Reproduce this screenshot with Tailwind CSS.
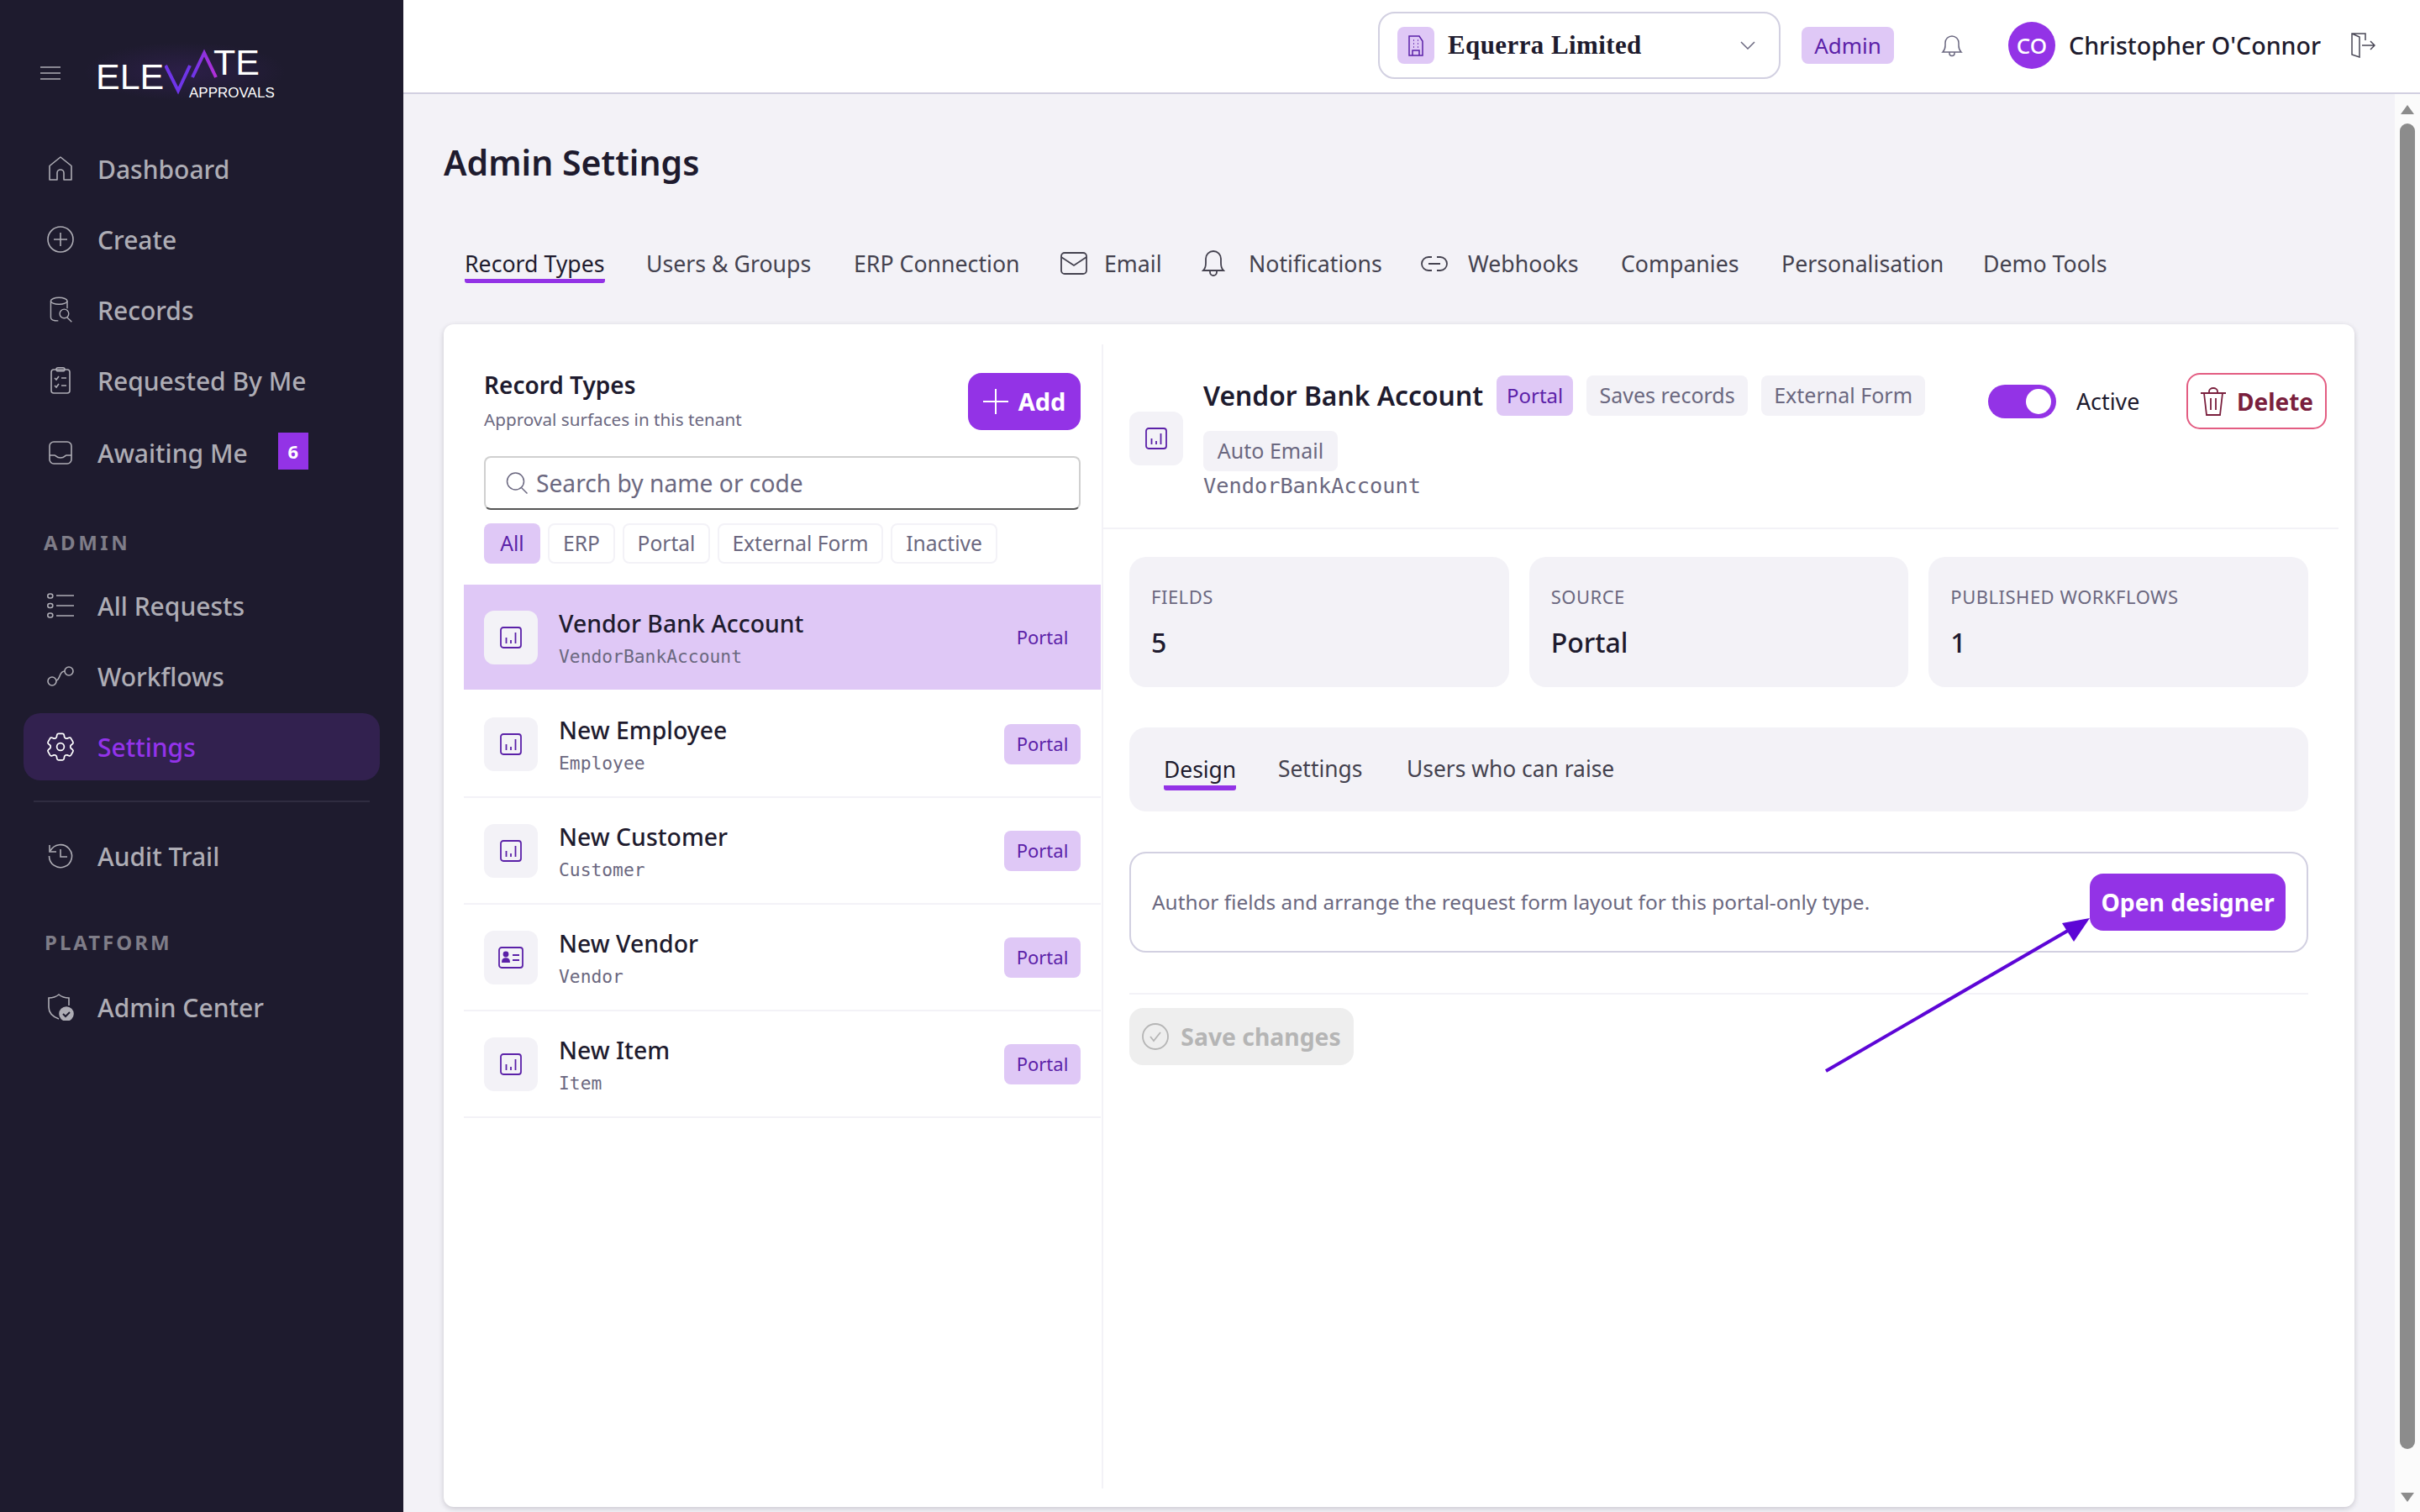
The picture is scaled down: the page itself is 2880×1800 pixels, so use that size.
<!DOCTYPE html>
<html lang="en">
<head>
    <meta charset="UTF-8">
    <meta name="viewport" content="width=device-width, initial-scale=1.0">
    <title>Admin Settings</title>
    <script src="https://cdn.jsdelivr.net/npm/@tailwindcss/browser@4"></script>
</head>
<body class="relative w-[2880px] h-[1800px] overflow-hidden flex bg-[#f3f2f7] font-['Noto_Sans',sans-serif] text-[#1e1b2e]">
    <!-- Sidebar -->
    <aside class="w-[480px] h-full shrink-0 bg-[#1e1b2e] flex flex-col px-[28px] text-[#aeadb5]">
        <div class="h-[161px] shrink-0 flex items-start pt-[79px] pl-[20px]">
            <svg class="w-[24px] h-[16px]" viewBox="0 0 24 16" fill="none" stroke="#aeadb5" stroke-width="1.5"><path d="M0 1h24M0 8h24M0 15h24"/></svg>
            <!-- Logo -->
            <div class="relative ml-[28px] -mt-[29px] w-[240px] h-[70px] bg-[radial-gradient(closest-side,#2c1f48,#1e1b2e)] font-['Liberation_Sans',sans-serif] text-white">
                <span class="absolute left-[14px] top-[16px] text-[43px] leading-[50px]">ELE</span>
                <svg class="absolute left-[96px] top-0 w-[64px] h-[64px]" viewBox="0 0 64 64" fill="none" stroke-width="4"><defs><linearGradient id="lg" x1="0" x2="1"><stop offset="0" stop-color="#6d35e8"/><stop offset="1" stop-color="#b32fd8"/></linearGradient></defs><path d="M1 28l15 30 14-30" stroke="#6f35e8"/><path d="M33 42L47 13l14 29" stroke="url(#lg)"/></svg>
                <span class="absolute left-[154px] -top-[1px] text-[43px] leading-[50px]">TE</span>
                <span class="absolute left-[125px] top-[51px] text-[17px] leading-[20px]">APPROVALS</span>
            </div>
        </div>
        <nav class="flex flex-col gap-[4px] text-[30px] font-medium">
            <a class="h-[80px] flex items-center pl-[28px] gap-[28px]"><svg class="w-[32px] h-[32px]" viewBox="0 0 32 32" fill="none" stroke="#aeadb5" stroke-width="1.6" stroke-linejoin="round"><path d="M3 29V12.5L16 2l13 10.5V29h-9v-8a4 4 0 0 0-8 0v8z"/></svg>Dashboard</a>
            <a class="h-[80px] flex items-center pl-[28px] gap-[28px]"><svg class="w-[32px] h-[32px]" viewBox="0 0 32 32" fill="none" stroke="#aeadb5" stroke-width="1.6"><circle cx="16" cy="16" r="15"/><path d="M16 8v16M8 16h16"/></svg>Create</a>
            <a class="h-[80px] flex items-center pl-[28px] gap-[28px]"><svg class="w-[32px] h-[32px]" viewBox="0 0 32 36" fill="none" stroke="#aeadb5" stroke-width="1.6"><ellipse cx="14" cy="6" rx="11" ry="4.5"/><path d="M3 6v22c0 3 4 4.5 10 4.5M25 6v10"/><circle cx="21" cy="23" r="6"/><path d="M25 28l6 6"/></svg>Records</a>
            <a class="h-[80px] flex items-center pl-[28px] gap-[28px]"><svg class="w-[32px] h-[32px]" viewBox="0 0 32 32" fill="none" stroke="#aeadb5" stroke-width="1.6"><rect x="5" y="3" width="22" height="28" rx="3"/><rect x="11" y="0.8" width="10" height="4" rx="2"/><path d="M9 13l2 2 3-4M17 13h6M9 22l2 2 3-4M17 22h6"/></svg>Requested By Me</a>
            <a class="h-[80px] mt-[2px] flex items-center pl-[28px] gap-[28px]"><svg class="w-[32px] h-[32px]" viewBox="0 0 32 32" fill="none" stroke="#aeadb5" stroke-width="1.6"><rect x="3" y="3" width="26" height="26" rx="5"/><path d="M3 19h6c1.500 0 2 3 7 3s5.500-3 7-3h6"/></svg>Awaiting Me<span class="ml-[8px] -mt-[4px] w-[36px] h-[44px] bg-[#9333e6] text-white text-[22px] font-bold flex items-center justify-center">6</span></a>
        </nav>
        <p class="mt-[44px] h-[46px] flex items-center pl-[24px] text-[24px] font-bold tracking-[3.500px] text-[#7f7d88]">ADMIN</p>
        <nav class="mt-[12px] flex flex-col gap-[4px] text-[30px] font-medium">
            <a class="h-[80px] flex items-center pl-[28px] gap-[28px]"><svg class="w-[32px] h-[32px]" viewBox="0 0 32 32" fill="none" stroke="#aeadb5" stroke-width="1.6"><rect x="0.800" y="2" width="6" height="5" rx="2.500"/><rect x="0.800" y="13.500" width="6" height="5" rx="2.500"/><rect x="0.800" y="25" width="6" height="5" rx="2.500"/><path d="M11 4h21M11 16h21M11 28h21"/></svg>All Requests</a>
            <a class="h-[80px] flex items-center pl-[28px] gap-[28px]"><svg class="w-[32px] h-[32px]" viewBox="0 0 32 32" fill="none" stroke="#aeadb5" stroke-width="1.6"><circle cx="6" cy="22" r="5"/><circle cx="26" cy="10" r="5"/><path d="M11 21c5-1 3-11 10-11"/></svg>Workflows</a>
            <a class="h-[80px] flex items-center pl-[23px] gap-[23px] rounded-[20px] bg-[#32214f] text-[#9333ea]"><svg class="w-[42px] h-[42px]" viewBox="0 0 24 24" fill="none" stroke="#fff" stroke-width="1" stroke-linejoin="round"><path d="M9.594 3.94c.09-.542.56-.94 1.11-.94h2.593c.55 0 1.02.398 1.11.94l.213 1.281c.063.374.313.686.645.87.074.04.147.083.22.127.325.196.72.257 1.075.124l1.217-.456a1.125 1.125 0 0 1 1.37.49l1.296 2.247a1.125 1.125 0 0 1-.26 1.431l-1.003.827c-.293.241-.438.613-.43.992a7.723 7.723 0 0 1 0 .255c-.008.378.137.75.43.991l1.004.827c.424.35.534.955.26 1.43l-1.298 2.247a1.125 1.125 0 0 1-1.369.491l-1.217-.456c-.355-.133-.75-.072-1.076.124a6.47 6.47 0 0 1-.22.128c-.331.183-.581.495-.644.869l-.213 1.281c-.09.543-.56.94-1.11.94h-2.594c-.55 0-1.019-.398-1.11-.94l-.213-1.281c-.062-.374-.312-.686-.644-.87a6.52 6.52 0 0 1-.22-.127c-.325-.196-.72-.257-1.076-.124l-1.217.456a1.125 1.125 0 0 1-1.369-.49l-1.297-2.247a1.125 1.125 0 0 1 .26-1.431l1.004-.827c.292-.24.437-.613.43-.991a6.932 6.932 0 0 1 0-.255c.007-.38-.138-.751-.43-.992l-1.004-.827a1.125 1.125 0 0 1-.26-1.43l1.297-2.247a1.125 1.125 0 0 1 1.37-.491l1.216.456c.356.133.751.072 1.076-.124.072-.044.146-.086.22-.128.332-.183.582-.495.644-.869l.214-1.28Z"/><circle cx="12" cy="12" r="2.500"/></svg>Settings</a>
        </nav>
        <div class="mt-[24px] mx-[12px] h-[2px] bg-[#2f2c40]"></div>
        <a class="mt-[24px] h-[80px] flex items-center pl-[28px] gap-[28px] text-[30px] font-medium"><svg class="w-[32px] h-[32px]" viewBox="0 0 32 32" fill="none" stroke="#aeadb5" stroke-width="1.6"><path d="M3 3v8h8"/><path d="M4 10a13.500 13.500 0 1 1-1.500 6M16 8v9h8"/></svg>Audit Trail</a>
        <p class="mt-[40px] h-[46px] flex items-center pl-[25px] text-[24px] font-bold tracking-[3px] text-[#7f7d88]">PLATFORM</p>
        <a class="mt-[14px] h-[80px] flex items-center pl-[28px] gap-[28px] text-[30px] font-medium"><svg class="w-[32px] h-[32px]" viewBox="0 0 32 32" fill="none" stroke="#aeadb5" stroke-width="1.6"><path d="M14 30C6 27 2 23 2 16V5c5 0 9-1.500 12-4 3 2.500 8 4 12 4v9"/><circle cx="23" cy="24" r="8" fill="#aeadb5"/><path d="M19 24l3 3 5-5" stroke="#1e1b2e" stroke-width="2"/></svg>Admin Center</a>
    </aside>

    <div class="flex-1 flex flex-col min-w-0">
        <!-- Top bar -->
        <header class="h-[112px] shrink-0 bg-white border-b-2 border-[#d2d0e1] flex items-center pb-[2px]">
            <div class="ml-[1160px] w-[479px] h-[80px] border-[2px] border-[#d2d0e1] rounded-[20px] flex items-center pl-[21px] pr-[28px]">
                <span class="w-[44px] h-[44px] rounded-[8px] bg-[#dfc8f6] flex items-center justify-center"><svg class="w-[24px] h-[26px]" viewBox="0 0 24 26" fill="none" stroke="#5b21a8" stroke-width="1.500"><path d="M4 25V2h12l4 6v17zM8 25v-6h8v6M9 7h1M14 7h1M9 11h1M14 11h1M9 15h1M14 15h1"/></svg></span>
                <span class="ml-[16px] font-['Liberation_Serif',serif] font-bold text-[31px] tracking-[0.4px]">Equerra Limited</span>
                <svg class="ml-auto w-[18px] h-[10px]" viewBox="0 0 18 10" fill="none" stroke="#6b6880" stroke-width="1.500"><path d="M1 1l8 8 8-8"/></svg>
            </div>
            <span class="ml-[25px] w-[110px] h-[44px] rounded-[8px] bg-[#dfc8f6] text-[#5b21a8] text-[26px] flex items-center justify-center">Admin</span>
            <svg class="ml-[56px] w-[26px] h-[30px]" viewBox="0 0 26 30" fill="none" stroke="#6b6880" stroke-width="1.500"><path d="M2 23c2-2 3-4 3-8v-3a8 8 0 0 1 16 0v3c0 4 1 6 3 8zM10 23.500v1a3 3 0 0 0 6 0v-1"/></svg>
            <span class="ml-[54px] w-[56px] h-[56px] rounded-full bg-[#9333e6] text-white text-[26px] font-medium flex items-center justify-center">CO</span>
            <span class="ml-[16px] text-[28.600px] font-medium whitespace-nowrap">Christopher O'Connor</span>
            <svg class="ml-[35px] w-[30px] h-[30px]" viewBox="0 0 30 30" fill="none" stroke="#4a4857" stroke-width="1.500"><path d="M18 9V1H2v25l9 3V5L2 1M14 15h15M24 10l5 5-5 5"/></svg>
        </header>

        <div class="flex-1 flex min-h-0">
            <main class="flex-1 min-w-0 px-[48px] flex flex-col pb-[6px]">
                <h1 class="mt-[52px] h-[58px] text-[41px] leading-[58px] font-semibold">Admin Settings</h1>
                <!-- Tabs -->
                <div class="mt-[73px] h-[46px] ml-[25px] flex items-start text-[26.700px] text-[#44424f] whitespace-nowrap leading-[38px]">
                    <a class="w-[216px]"><span class="inline-block border-b-[5px] border-[#9333e6] rounded-b-[3px] text-[#1e1b2e] h-[42px]">Record Types</span></a>
                    <a class="w-[247px]">Users &amp; Groups</a>
                    <a class="w-[246px]">ERP Connection</a>
                    <a class="w-[168px] flex items-center gap-[20px]"><svg class="w-[32px] h-[28px]" viewBox="0 0 32 28" fill="none" stroke="#44424f" stroke-width="1.800"><rect x="1" y="1" width="30" height="25" rx="4"/><path d="M1 6l15 10L31 6"/></svg>Email</a>
                    <a class="w-[261px] flex items-center gap-[28px]"><svg class="w-[28px] h-[34px] -mt-[2px]" viewBox="0 0 28 34" fill="none" stroke="#44424f" stroke-width="1.800"><path d="M2 26c2-2 3-5 3-9v-5a9 9 0 0 1 18 0v5c0 4 1 7 3 9zM10 26v2a4 4 0 0 0 8 0v-2"/></svg>Notifications</a>
                    <a class="w-[238px] flex items-center gap-[24px]"><svg class="w-[32px] h-[20px]" viewBox="0 0 32 20" fill="none" stroke="#44424f" stroke-width="1.800"><path d="M13 2H9a8 8 0 0 0 0 16h4M19 2h4a8 8 0 0 1 0 16h-4M9 10h14"/></svg>Webhooks</a>
                    <a class="w-[191px]">Companies</a>
                    <a class="w-[240px]">Personalisation</a>
                    <a>Demo Tools</a>
                </div>

                <!-- Main card -->
                <section class="mt-[45px] flex-1 min-h-0 bg-white rounded-[12px] shadow-[0_2px_6px_rgba(30,27,46,0.2)] flex">
                    <!-- Record type list -->
                    <div class="w-[783px] shrink-0 pl-[24px] pr-[1px] pt-[32px] flex flex-col">
                        <div class="relative">
                            <div class="px-[24px] flex justify-between">
                                <div class="pt-[26px]">
                                    <h2 class="text-[28px] font-semibold leading-[36px] -mt-[4px]">Record Types</h2>
                                    <p class="text-[20.700px] leading-[30px] mt-[8px] text-[#6b6880]">Approval surfaces in this tenant</p>
                                </div>
                                <button class="w-[134px] h-[68px] mt-[26px] rounded-[16px] bg-[#9333e6] text-white text-[29px] font-bold flex items-center justify-center gap-[12px]"><svg class="w-[30px] h-[30px]" viewBox="0 0 30 30" stroke="#fff" stroke-width="2"><path d="M15 0v30M0 15h30"/></svg>Add</button>
                            </div>
                            <div class="mx-[24px] mt-[29px] h-[64px] rounded-[8px] border-2 border-[#d0d0d0] border-b-[#555] flex items-center pl-[24px] gap-[10px] text-[28.200px] text-[#6b6880]"><svg class="w-[26px] h-[26px]" viewBox="0 0 26 26" fill="none" stroke="#6b6880" stroke-width="1.500"><circle cx="11.500" cy="11" r="10"/><path d="M18.500 18.500l7 7"/></svg>Search by name or code</div>
                            <div class="mx-[24px] mt-[16px] flex gap-[9px] text-[24.600px] text-[#6b6880]">
                                <span class="h-[48px] w-[67px] rounded-[8px] bg-[#dfc8f6] text-[#5b21a8] flex items-center justify-center">All</span>
                                <span class="h-[48px] w-[80px] rounded-[8px] border-2 border-[#f3f2f7] flex items-center justify-center">ERP</span>
                                <span class="h-[48px] w-[104px] rounded-[8px] border-2 border-[#f3f2f7] flex items-center justify-center">Portal</span>
                                <span class="h-[48px] w-[197px] rounded-[8px] border-2 border-[#f3f2f7] flex items-center justify-center">External Form</span>
                                <span class="h-[48px] w-[127px] rounded-[8px] border-2 border-[#f3f2f7] flex items-center justify-center">Inactive</span>
                            </div>
                        </div>
                        <ul class="mt-[25px]">
                            <li class="h-[127px] border-b-2 border-white bg-[#dfc8f6] flex items-center px-[24px]">
                                <span class="w-[64px] h-[64px] rounded-[12px] bg-[#f3f2f7] flex items-center justify-center"><svg class="w-[26px] h-[26px]" viewBox="0 0 26 26" fill="none" stroke="#5b21a8" stroke-width="1.800"><rect x="1" y="1" width="24" height="24" rx="3"/><path d="M7.500 20v-7M13 20v-4M18.500 20V7"/></svg></span>
                                <div class="ml-[25px] flex-1"><p class="text-[28.400px] font-medium leading-[40px]">Vendor Bank Account</p><p class="text-[21.300px] leading-[28px] mt-[6px] font-['DejaVu_Sans_Mono',monospace] text-[#6b6880]">VendorBankAccount</p></div>
                                <span class="w-[91px] h-[48px] rounded-[8px] bg-[#dfc8f6] text-[#5b21a8] text-[22px] flex items-center justify-center">Portal</span>
                            </li>
                            <li class="h-[127px] border-b-2 border-[#f3f2f7] flex items-center px-[24px]">
                                <span class="w-[64px] h-[64px] rounded-[12px] bg-[#f3f2f7] flex items-center justify-center"><svg class="w-[26px] h-[26px]" viewBox="0 0 26 26" fill="none" stroke="#5b21a8" stroke-width="1.800"><rect x="1" y="1" width="24" height="24" rx="3"/><path d="M7.500 20v-7M13 20v-4M18.500 20V7"/></svg></span>
                                <div class="ml-[25px] flex-1"><p class="text-[28.400px] font-medium leading-[40px]">New Employee</p><p class="text-[21.300px] leading-[28px] mt-[6px] font-['DejaVu_Sans_Mono',monospace] text-[#6b6880]">Employee</p></div>
                                <span class="w-[91px] h-[48px] rounded-[8px] bg-[#dfc8f6] text-[#5b21a8] text-[22px] flex items-center justify-center">Portal</span>
                            </li>
                            <li class="h-[127px] border-b-2 border-[#f3f2f7] flex items-center px-[24px]">
                                <span class="w-[64px] h-[64px] rounded-[12px] bg-[#f3f2f7] flex items-center justify-center"><svg class="w-[26px] h-[26px]" viewBox="0 0 26 26" fill="none" stroke="#5b21a8" stroke-width="1.800"><rect x="1" y="1" width="24" height="24" rx="3"/><path d="M7.500 20v-7M13 20v-4M18.500 20V7"/></svg></span>
                                <div class="ml-[25px] flex-1"><p class="text-[28.400px] font-medium leading-[40px]">New Customer</p><p class="text-[21.300px] leading-[28px] mt-[6px] font-['DejaVu_Sans_Mono',monospace] text-[#6b6880]">Customer</p></div>
                                <span class="w-[91px] h-[48px] rounded-[8px] bg-[#dfc8f6] text-[#5b21a8] text-[22px] flex items-center justify-center">Portal</span>
                            </li>
                            <li class="h-[127px] border-b-2 border-[#f3f2f7] flex items-center px-[24px]">
                                <span class="w-[64px] h-[64px] rounded-[12px] bg-[#f3f2f7] flex items-center justify-center"><svg class="w-[30px] h-[26px]" viewBox="0 0 30 26" fill="none" stroke="#5b21a8" stroke-width="1.800"><rect x="1" y="1" width="28" height="24" rx="3"/><circle cx="9" cy="9" r="2.500" fill="#5b21a8"/><path d="M5 18c0-5 8-5 8 0z" fill="#5b21a8"/><path d="M17 10h8M17 16h8"/></svg></span>
                                <div class="ml-[25px] flex-1"><p class="text-[28.400px] font-medium leading-[40px]">New Vendor</p><p class="text-[21.300px] leading-[28px] mt-[6px] font-['DejaVu_Sans_Mono',monospace] text-[#6b6880]">Vendor</p></div>
                                <span class="w-[91px] h-[48px] rounded-[8px] bg-[#dfc8f6] text-[#5b21a8] text-[22px] flex items-center justify-center">Portal</span>
                            </li>
                            <li class="h-[127px] border-b-2 border-[#f3f2f7] flex items-center px-[24px]">
                                <span class="w-[64px] h-[64px] rounded-[12px] bg-[#f3f2f7] flex items-center justify-center"><svg class="w-[26px] h-[26px]" viewBox="0 0 26 26" fill="none" stroke="#5b21a8" stroke-width="1.800"><rect x="1" y="1" width="24" height="24" rx="3"/><path d="M7.500 20v-7M13 20v-4M18.500 20V7"/></svg></span>
                                <div class="ml-[25px] flex-1"><p class="text-[28.400px] font-medium leading-[40px]">New Item</p><p class="text-[21.300px] leading-[28px] mt-[6px] font-['DejaVu_Sans_Mono',monospace] text-[#6b6880]">Item</p></div>
                                <span class="w-[91px] h-[48px] rounded-[8px] bg-[#dfc8f6] text-[#5b21a8] text-[22px] flex items-center justify-center">Portal</span>
                            </li>
                        </ul>
                    </div>

                    <!-- Detail -->
                    <div class="flex-1 min-w-0 mt-[24px] mb-[22px] border-l-2 border-[#f3f2f7]">
                        <div class="h-[220px] pr-[14px] pl-[31px] pt-[37px] flex border-b-2 border-[#f3f2f7] mr-[19px]">
                            <span class="mt-[43px] w-[64px] h-[64px] shrink-0 rounded-[12px] bg-[#f3f2f7] flex items-center justify-center"><svg class="w-[26px] h-[26px]" viewBox="0 0 26 26" fill="none" stroke="#5b21a8" stroke-width="1.800"><rect x="1" y="1" width="24" height="24" rx="3"/><path d="M7.500 20v-7M13 20v-4M18.500 20V7"/></svg></span>
                            <div class="ml-[24px] w-[880px]">
                                <div class="flex flex-wrap items-center gap-x-[16px] gap-y-[18px]">
                                    <h3 class="text-[31.800px] font-semibold leading-[48px]">Vendor Bank Account</h3>
                                    <span class="h-[48px] w-[91px] rounded-[8px] bg-[#dfc8f6] text-[#5b21a8] text-[24px] flex items-center justify-center">Portal</span>
                                    <span class="h-[48px] w-[192px] rounded-[8px] bg-[#f3f2f7] text-[#6b6880] text-[25px] flex items-center justify-center">Saves records</span>
                                    <span class="h-[48px] w-[195px] rounded-[8px] bg-[#f3f2f7] text-[#6b6880] text-[25px] flex items-center justify-center">External Form</span>
                                    <span class="h-[48px] w-[160px] rounded-[8px] bg-[#f3f2f7] text-[#6b6880] text-[25px] flex items-center justify-center">Auto Email</span>
                                </div>
                                <p class="mt-[2px] text-[25.300px] leading-[32px] font-['DejaVu_Sans_Mono',monospace] text-[#6b6880]">VendorBankAccount</p>
                            </div>
                            <div class="ml-[54px] w-[81px] h-[40px] mt-[11px] rounded-full bg-[#9333e6] shrink-0 relative"><span class="absolute right-[6px] top-[5px] w-[30px] h-[30px] rounded-full bg-white"></span></div>
                            <span class="ml-[24px] mt-[11px] h-[40px] leading-[40px] text-[26.800px]">Active</span>
                            <button class="ml-auto -mt-[3px] w-[167px] h-[67px] rounded-[16px] border-2 border-[#e35d82] text-[#7a1f3d] text-[28px] font-bold flex items-center justify-center gap-[12px]"><svg class="w-[32px] h-[34px]" viewBox="0 0 32 34" fill="none" stroke="#7a1f3d" stroke-width="1.800"><path d="M1 7h30M5 7l3 26h16l3-26M11 7V5a5 4 0 0 1 10 0v2M13 13v14M19 13v14"/></svg>Delete</button>
                        </div>

                        <div class="pl-[31px] pr-[55px]">
                            <div class="mt-[33px] grid grid-cols-3 gap-[24px]">
                                <div class="h-[155px] rounded-[20px] bg-[#f3f2f7] px-[26px] pt-[32px]"><p class="text-[22px] leading-[30px] tracking-[0.5px] text-[#6b6880]">FIELDS</p><p class="mt-[17px] text-[32px] leading-[46px] font-medium">5</p></div>
                                <div class="h-[155px] rounded-[20px] bg-[#f3f2f7] px-[26px] pt-[32px]"><p class="text-[22px] leading-[30px] tracking-[0.5px] text-[#6b6880]">SOURCE</p><p class="mt-[17px] text-[32px] leading-[46px] font-medium">Portal</p></div>
                                <div class="h-[155px] rounded-[20px] bg-[#f3f2f7] px-[26px] pt-[32px]"><p class="text-[22px] leading-[30px] tracking-[0.5px] text-[#6b6880]">PUBLISHED WORKFLOWS</p><p class="mt-[17px] text-[32px] leading-[46px] font-medium">1</p></div>
                            </div>
                            <div class="mt-[48px] h-[100px] rounded-[20px] bg-[#f3f2f7] flex items-center pl-[41px] text-[26.400px] text-[#44424f] whitespace-nowrap">
                                <a class="w-[136px]"><span class="inline-block h-[44px] leading-[38px] border-b-[6px] border-[#9333e6] rounded-b-[3px] text-[#1e1b2e] mt-[6px]">Design</span></a>
                                <a class="w-[153px]">Settings</a>
                                <a>Users who can raise</a>
                            </div>
                            <div class="mt-[48px] h-[120px] rounded-[20px] border-2 border-[#d2d0e1] flex items-center justify-between pl-[25px] pr-[25px] text-[24.400px] text-[#6b6880]">
                                <p>Author fields and arrange the request form layout for this portal-only type.</p>
                                <button class="w-[233px] h-[68px] rounded-[16px] bg-[#9333e6] text-white text-[28.300px] font-bold">Open designer</button>
                            </div>
                            <div class="mt-[48px] border-t-2 border-[#f3f2f7] pt-[16px]">
                                <button class="w-[267px] h-[68px] rounded-[16px] bg-[#eeeeee] text-[#b5b5b5] text-[28.300px] font-bold flex items-center justify-center gap-[14px]"><svg class="w-[32px] h-[32px]" viewBox="0 0 32 32" fill="none" stroke="#b5b5b5" stroke-width="1.800"><circle cx="16" cy="16" r="15"/><path d="M10 16l4 5 8-10"/></svg>Save changes</button>
                            </div>
                        </div>
                    </div>
                </section>
            </main>

            <!-- Scrollbar -->
            <div class="w-[30px] shrink-0 bg-[#fbfbfb] flex flex-col items-center pt-[13px] pb-[12px]">
                <span class="w-0 h-0 border-x-[8px] border-x-transparent border-b-[11px] border-b-[#8c8c8c]"></span>
                <span class="mt-[11px] w-[18px] flex-1 rounded-full bg-[#8c8c8c]"></span>
                <span class="mt-[52px] w-0 h-0 border-x-[8px] border-x-transparent border-t-[11px] border-t-[#8c8c8c]"></span>
            </div>
        </div>
    </div>

    <!-- Annotation arrow -->
    <svg class="absolute left-[2160px] top-[1080px] w-[340px] h-[210px] pointer-events-none" viewBox="0 0 340 210" fill="none"><path d="M13 195L318 18" stroke="#5d06d6" stroke-width="4"/><path d="M327 13l-33 6 14 22z" fill="#5d06d6"/></svg>
</body>
</html>
